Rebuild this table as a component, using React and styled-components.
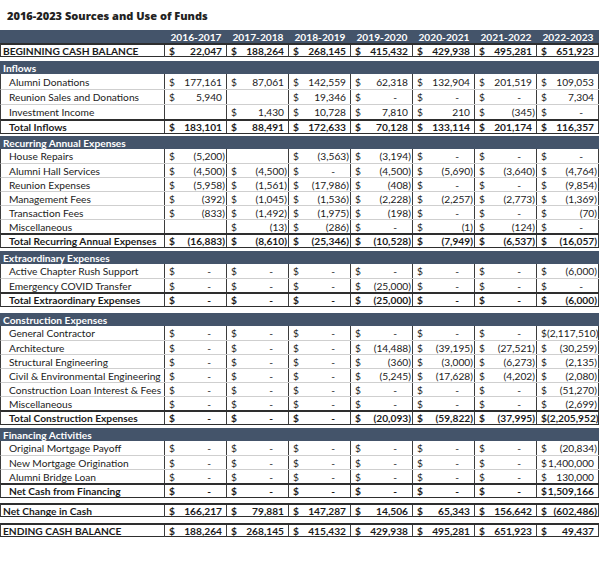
import React from 'react';
import styled, { createGlobalStyle } from 'styled-components';

const YEARS = ['2016-2017', '2017-2018', '2018-2019', '2019-2020', '2020-2021', '2021-2022', '2022-2023'];
const Z = 0; // accounting dash
const N = null; // empty cell

const sections = [
	{
		title: 'Inflows',
		rowH: 15,
		rows: [
			['Alumni Donations', [177161, 87061, 142559, 62318, 132904, 201519, 109053]],
			['Reunion Sales and Donations', [5940, N, 19346, Z, Z, Z, 7304]],
			['Investment Income', [N, 1430, 10728, 7810, 210, -345, Z]],
		],
		total: ['Total Inflows', [183101, 88491, 172633, 70128, 133114, 201174, 116357]],
		gap: 4,
	},
	{
		title: 'Recurring Annual Expenses',
		rows: [
			['House Repairs', [-5200, N, -3563, -3194, Z, Z, Z]],
			['Alumni Hall Services', [-4500, -4500, Z, -4500, -5690, -3640, -4764]],
			['Reunion Expenses', [-5958, -1561, -17986, -408, Z, Z, -9854]],
			['Management Fees', [-392, -1045, -1536, -2228, -2257, -2773, -1369]],
			['Transaction Fees', [-833, -1492, -1975, -198, Z, Z, -70]],
			['Miscellaneous', [N, -13, -286, Z, -1, -124, Z]],
		],
		total: ['Total Recurring Annual Expenses', [-16883, -8610, -25346, -10528, -7949, -6537, -16057]],
		gap: 2,
	},
	{
		title: 'Extraordinary Expenses',
		rows: [
			['Active Chapter Rush Support', [Z, Z, Z, Z, Z, Z, -6000]],
			['Emergency COVID Transfer', [Z, Z, Z, -25000, Z, Z, Z]],
		],
		total: ['Total Extraordinary Expenses', [Z, Z, Z, -25000, Z, Z, -6000]],
		gap: 3,
	},
	{
		title: 'Construction Expenses',
		rows: [
			['General Contractor', [Z, Z, Z, Z, Z, Z, -2117510]],
			['Architecture', [Z, Z, Z, -14488, -39195, -27521, -30259]],
			['Structural Engineering', [Z, Z, Z, -360, -3000, -6273, -2135]],
			['Civil & Environmental Engineering', [Z, Z, Z, -5245, -17628, -4202, -2080]],
			['Construction Loan Interest & Fees', [Z, Z, Z, Z, Z, Z, -51270]],
			['Miscellaneous', [Z, Z, Z, Z, Z, Z, -2699]],
		],
		total: ['Total Construction Expenses', [Z, Z, Z, -20093, -59822, -37995, -2205952]],
		gap: 6,
	},
	{
		title: 'Financing Activities',
		rows: [
			['Original Mortgage Payoff', [Z, Z, Z, Z, Z, Z, -20834]],
			['New Mortgage Origination', [Z, Z, Z, Z, Z, Z, 1400000]],
			['Alumni Bridge Loan', [Z, Z, Z, Z, Z, Z, 130000]],
		],
		total: ['Net Cash from Financing', [Z, Z, Z, Z, Z, Z, 1509166]],
		gap: 3,
	},
];

const beginning = [22047, 188264, 268145, 415432, 429938, 495281, 651923];
const netChange = [166217, 79881, 147287, 14506, 65343, 156642, -602486];
const ending = [188264, 268145, 415432, 429938, 495281, 651923, 49437];

const fmt = (v) => {
	if (v === 0) return '-';
	const s = Math.abs(v).toLocaleString('en-US');
	return v < 0 ? `(${s})` : s;
};

const kindOf = (v) => (v === 0 ? 'dash' : v < 0 ? 'neg' : 'pos');

const GlobalStyle = createGlobalStyle`
	body {
		margin: 0;
		background: #fff;
	}
`;

const Page = styled.div`
	width: 600px;
	padding-top: 10px;
	font-family: Lato, 'Liberation Sans', sans-serif;
	font-size: 10.2px;
	color: #1b1b1b;
`;

const Title = styled.h1`
	margin: 0 0 8px 7px;
	font-family: 'Open Sans', 'DejaVu Sans', sans-serif;
	font-size: 11px;
	font-weight: 800;
	line-height: 12px;
	color: #222;
`;

const Table = styled.div`
	width: 599px;
	display: flex;
	flex-direction: column;
`;

const Section = styled.div`
	display: flex;
	flex-direction: column;
	margin-top: ${(p) => p.gap || 0}px;
`;

const YearBar = styled.div`
	height: 13px;
	background: #44546a;
	color: #fff;
	font-weight: 700;
	display: grid;
	grid-template-columns: 165px repeat(7, 62px);
	align-items: center;
`;

const YearHead = styled.span`
	text-align: center;
`;

const SectionBar = styled.div`
	height: 13px;
	background: #44546a;
	color: #fff;
	font-weight: 700;
	display: flex;
	align-items: center;
	padding-left: 3px;
`;

const Row = styled.div`
	box-sizing: border-box;
	height: ${(p) => p.h || 14}px;
	display: grid;
	grid-template-columns: 164px repeat(7, 62px);
	border-left: 1px solid #3d3d3d;
	border-top: ${(p) => (p.total ? '2px solid #2e2e2e' : p.first ? 'none' : '1px solid #cfcfcf')};
	border-bottom: ${(p) => (p.total ? '1px solid #2e2e2e' : 'none')};
	font-weight: ${(p) => (p.total ? 700 : 400)};
`;

const Label = styled.div`
	display: flex;
	align-items: center;
	padding-left: ${(p) => (p.indent ? 8 : 2)}px;
	border-right: 1px solid #3d3d3d;
	white-space: nowrap;
`;

const Cell = styled.div`
	display: flex;
	align-items: center;
	justify-content: space-between;
	padding-left: 4px;
	border-right: 1px solid #3d3d3d;
	white-space: nowrap;
`;

const Amount = styled.span`
	padding-right: ${(p) => (p.kind === 'dash' ? 15 : p.kind === 'pos' ? 4 : 1)}px;
`;

const Values = ({ values }) =>
	values.map((v, i) => (
		<Cell key={i}>
			{v !== null && (
				<>
					<span>$</span>
					<Amount kind={kindOf(v)}>{fmt(v)}</Amount>
				</>
			)}
		</Cell>
	));

const App = () => (
	<Page>
		<GlobalStyle />
		<Title>2016-2023 Sources and Use of Funds</Title>
		<Table>
			<YearBar>
				<span />
				{YEARS.map((y) => (
					<YearHead key={y}>{y}</YearHead>
				))}
			</YearBar>
			<Row total>
				<Label>BEGINNING CASH BALANCE</Label>
				<Values values={beginning} />
			</Row>
			{sections.map((s) => (
				<Section key={s.title} gap={s.gap}>
					<SectionBar>{s.title}</SectionBar>
					{s.rows.map(([label, values], i) => (
						<Row key={label + i} first={i === 0} h={s.rowH}>
							<Label indent>{label}</Label>
							<Values values={values} />
						</Row>
					))}
					<Row total h={15}>
						<Label indent>{s.total[0]}</Label>
						<Values values={s.total[1]} />
					</Row>
				</Section>
			))}
			<Section gap={5}>
				<Row total>
					<Label>Net Change in Cash</Label>
					<Values values={netChange} />
				</Row>
			</Section>
			<Section gap={6}>
				<Row total>
					<Label>ENDING CASH BALANCE</Label>
					<Values values={ending} />
				</Row>
			</Section>
		</Table>
	</Page>
);

export default App;
